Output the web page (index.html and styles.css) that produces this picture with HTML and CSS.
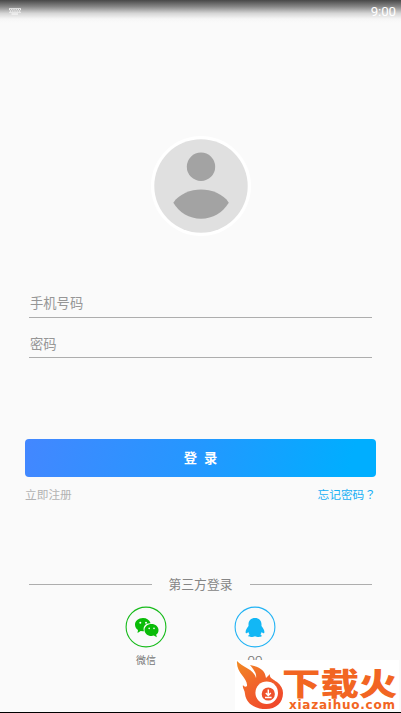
FILE: index.html
```html
<!DOCTYPE html>
<html lang="zh-CN">
<head>
<meta charset="utf-8">
<title>登录</title>
<link rel="stylesheet" href="styles.css">
</head>
<body>
<div class="screen">
  <header class="status">
    <svg class="keyboard" width="12" height="7" viewBox="0 0 12 7"><path d="M0 .5H12M0 4.3H12" stroke="#fff" stroke-opacity=".65"/><path d="M0 1.7H12M1 3H12" stroke="#fff" stroke-dasharray="1.2 1"/><path d="M2.5 6H9" stroke="#fff"/></svg>
    <span class="clock">9:00</span>
  </header>
  <main class="login">
    <svg class="avatar" width="100" height="100" viewBox="0 0 100 100"><circle cx="50" cy="50" r="50" fill="#fff"/><circle cx="50" cy="50" r="46.7" fill="#e0e0e0"/><circle cx="50" cy="30.800" r="14.200" fill="#a3a3a3"/><path d="M22.300 66.800C28 58 40 53.600 50 53.600S72.500 58 77.800 66.800C71.500 77 62 82.700 50 82.700S28.500 77 22.300 66.800Z" fill="#a3a3a3"/></svg>
    <div class="field">手机号码</div>
    <div class="field">密码</div>
    <button class="submit"><span>登</span><span>录</span></button>
    <div class="links"><a class="register">立即注册</a><a class="forgot">忘记密码<span class="mark" lang="zh-TW">？</span></a></div>
    <div class="divider">第三方登录</div>
    <div class="socials">
      <div class="social">
        <svg width="42" height="42" viewBox="0 0 42 42"><circle cx="21" cy="21" r="19.900" fill="none" stroke="#17bb1b" stroke-width="1.100"/><path fill="#09bb07" d="M18 12C13.300 12 10 15 10 18.700c0 2.200 1.200 4 3 5.200l-.5 3 3.200-1.900 2.300.3h1C17.400 20.500 20.700 17 25.600 17.200 24.600 14 21.700 12 18 12Z"/><path fill="#09bb07" d="M26.500 18c-4 0-7 2.700-7 6s3 6 7 6l2.300-.4 3 1.600-.6-2.600C32.800 27.500 33.500 26 33.500 24c0-3.300-3-6-7-6Z"/><g fill="#fafafa"><circle cx="15.300" cy="16.800" r="1"/><circle cx="21" cy="16.800" r="1"/><circle cx="24.200" cy="22.400" r=".8"/><circle cx="29" cy="22.400" r=".8"/></g></svg>
        <span>微信</span>
      </div>
      <div class="social">
        <svg width="42" height="42" viewBox="0 0 42 42"><circle cx="21" cy="21" r="19.900" fill="none" stroke="#22b3f4" stroke-width="1.100"/><path fill="#12b7f5" d="M21 12c-4 0-6.500 2.700-6.500 6.300v1.800c-1.800 2.300-3.500 5-2.700 7 .6.600 1.500 0 2.500-1 .2 1 .7 1.700 1.300 2.500-1 .4-1.500 1-1.200 1.700.5.900 5.300.8 6.600-.1 1.300.9 6.100 1 6.600.1.300-.7-.2-1.300-1.200-1.700.6-.8 1.100-1.500 1.300-2.500 1 1 1.900 1.600 2.500 1 .8-2-.9-4.700-2.700-7v-1.800C27.500 14.700 25 12 21 12Z"/></svg>
        <span>QQ</span>
      </div>
    </div>
  </main>
  <aside class="watermark">
    <svg class="flame" width="50" height="50" viewBox="0 0 50 50"><defs><linearGradient id="fire" x1="0" y1="0" x2=".7" y2="1"><stop stop-color="#f18a22"/><stop offset=".5" stop-color="#f1652b"/><stop offset="1" stop-color="#f0482a"/></linearGradient></defs><path fill="url(#fire)" d="M2 1C7 7 19 9 21 18C22 13 18 9 15 5C25 7 30 10 31 18L35 14C34 18 38 19 42 22C46 25 48 29 48 33C48 43 41 49 31 49C19 49 11 43 10 34C10 30 7 28 8 25C9 27 11 27 12 26C13 18 1 13 2 1Z"/><circle cx="31.700" cy="32.700" r="11.300" fill="#fff"/><circle cx="33.300" cy="34" r="6.600" fill="#ee512b"/><path d="M33.300 29.500V35M30.800 33l2.500 2.500 2.500-2.500M30 37.500h6.600" fill="none" stroke="#fff" stroke-width="1.500"/></svg>
    <div class="brand"><strong>下载火</strong><span>xiazaihuo.com</span></div>
  </aside>
</div>
</body>
</html>
```
FILE: styles.css
```css
* { box-sizing: border-box; }
body { margin: 0; background: #fafafa; font-family: "Noto Sans CJK SC", sans-serif; }
.screen { position: relative; height: 713px; overflow: hidden; border-bottom: 1px solid #000; background: #fafafa; }
.status { height: 23px; padding: 0 5px 0 9px; display: flex; justify-content: space-between; align-items: center; background: linear-gradient(#484848, #858585 28%, #d5d5d5 58%, #f6f6f6 82%, #fafafa); }
.keyboard { display: block; }
.clock { font: 13.3px/22px Roboto, sans-serif; letter-spacing: -.1px; color: #fff; }
.login { display: flex; flex-direction: column; padding: 113px 25px 0; }
.avatar { display: block; align-self: center; margin-bottom: 53px; }
.field { height: 29px; margin: 0 4px 11px; padding-left: 1px; border-bottom: 1px solid #adadad; font-size: 13.3px; line-height: 29px; color: #969696; }
.field:first-of-type { line-height: 28px; }
.submit { display: flex; justify-content: center; gap: 7px; height: 38px; margin: 70px 0 8px; padding: 0; border: 0; border-radius: 4px; background: linear-gradient(105deg, #4387ff, #2398ff 50%, #00aeff 92%); color: #fff; font: 700 13.3px/38px "Noto Sans CJK SC", sans-serif; }
.links { display: flex; justify-content: space-between; font-size: 11.7px; line-height: 17px; height: 18px; }
.register { color: #b2b2b2; }
.forgot { color: #16aff5; }
.mark { font-family: "Noto Sans CJK TC", sans-serif; }
.divider { display: flex; align-items: center; gap: 17px; margin: 71px 4px 0; font-size: 12.8px; line-height: 20px; color: #858585; }
.divider::before, .divider::after { content: ""; height: 1px; flex: 1; background: #adadad; }
.socials { display: flex; justify-content: center; gap: 67px; margin-top: 12px; }
.social { width: 42px; display: flex; flex-direction: column; align-items: center; font-size: 10px; line-height: 14px; color: #777; }
.social svg { display: block; margin-bottom: 5px; }
.watermark { position: absolute; left: 235px; top: 660px; width: 164px; height: 50px; display: flex; background: #fff; }
.flame { flex: none; }
.brand { display: flex; flex-direction: column; color: #f26522; }
.brand strong { height: 40px; font-size: 32px; font-weight: 900; line-height: 42px; white-space: nowrap; transform: scale(1.2, .97); transform-origin: left 20px; margin-left: -3px; }
.brand span { margin-left: 4px; font: bold 12px/10px "DejaVu Sans", sans-serif; letter-spacing: .75px; white-space: nowrap; }
```
